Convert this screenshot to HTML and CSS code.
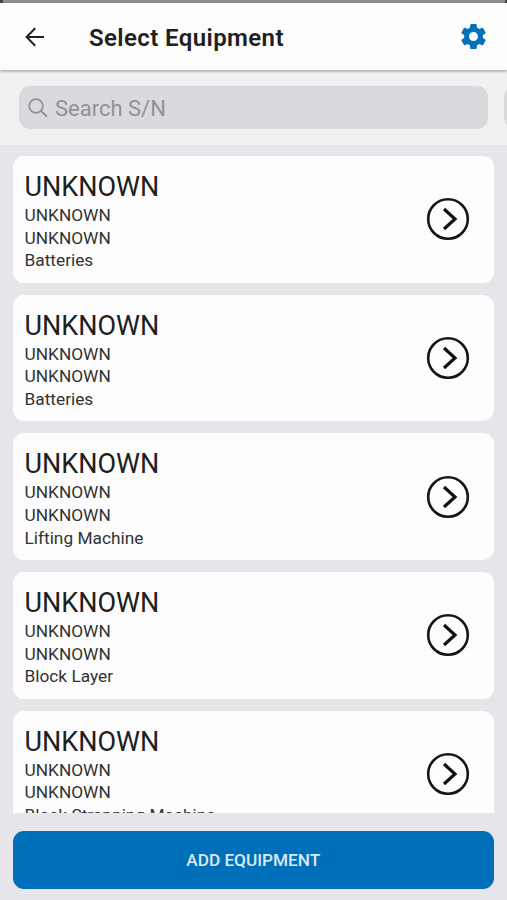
FILE: index.html
```html
<!DOCTYPE html>
<html lang="en">
<head>
<meta charset="utf-8">
<title>Select Equipment</title>
<link rel="stylesheet" href="styles.css">
</head>
<body>
<svg class="defs" aria-hidden="true">
  <symbol id="go" viewBox="0 0 44 44"><circle cx="22" cy="22" r="19.8" fill="none" stroke="#161616" stroke-width="2.6"/><path d="M18 12 29 22 18 32" fill="none" stroke="#111" stroke-width="3.2"/></symbol>
</svg>
<div class="status"></div>
<header class="bar">
  <svg class="back" viewBox="0 0 20 20"><path d="M19 10H2M10.2 1.2 1.6 10l8.6 8.8" fill="none" stroke="#202020" stroke-width="2"/></svg>
  <h1>Select Equipment</h1>
  <svg class="gear" viewBox="2 2 20 20"><path fill="#0670b8" d="M19.43 12.98c.04-.32.07-.64.07-.98s-.03-.66-.07-.98l2.11-1.65c.19-.15.24-.42.12-.64l-2-3.46c-.12-.22-.39-.3-.61-.22l-2.49 1c-.52-.4-1.08-.73-1.69-.98l-.38-2.65C14.46 2.18 14.25 2 14 2h-4c-.25 0-.46.18-.49.42l-.38 2.65c-.61.25-1.17.59-1.69.98l-2.49-1c-.23-.09-.49 0-.61.22l-2 3.46c-.13.22-.07.49.12.64l2.11 1.65c-.04.32-.07.65-.07.98s.03.66.07.98l-2.11 1.65c-.19.15-.24.42-.12.64l2 3.46c.12.22.39.3.61.22l2.49-1c.52.4 1.08.73 1.69.98l.38 2.65c.03.24.24.42.49.42h4c.25 0 .46-.18.49-.42l.38-2.65c.61-.25 1.17-.59 1.69-.98l2.49 1c.23.09.49 0 .61-.22l2-3.46c.12-.22.07-.49-.12-.64l-2.11-1.65zM12 15.6c-1.98 0-3.6-1.62-3.6-3.6s1.62-3.6 3.6-3.6 3.6 1.62 3.6 3.6-1.62 3.6-3.6 3.6z"/></svg>
</header>
<div class="filters">
  <div class="search">
    <svg viewBox="0 0 20 20"><circle cx="8" cy="8" r="6.8" fill="none" stroke="#929296" stroke-width="1.7"/><path d="m12.8 12.8 6 5.6" stroke="#929296" stroke-width="2"/></svg>
    <span>Search S/N</span>
  </div>
  <div class="next"></div>
</div>
<main class="list">
  <article class="card"><div><h2>UNKNOWN</h2><p>UNKNOWN</p><p>UNKNOWN</p><p>Batteries</p></div><svg><use href="#go"/></svg></article>
  <article class="card"><div><h2>UNKNOWN</h2><p>UNKNOWN</p><p>UNKNOWN</p><p>Batteries</p></div><svg><use href="#go"/></svg></article>
  <article class="card"><div><h2>UNKNOWN</h2><p>UNKNOWN</p><p>UNKNOWN</p><p>Lifting Machine</p></div><svg><use href="#go"/></svg></article>
  <article class="card"><div><h2>UNKNOWN</h2><p>UNKNOWN</p><p>UNKNOWN</p><p>Block Layer</p></div><svg><use href="#go"/></svg></article>
  <article class="card"><div><h2>UNKNOWN</h2><p>UNKNOWN</p><p>UNKNOWN</p><p>Block Strapping Machine</p></div><svg><use href="#go"/></svg></article>
</main>
<footer class="actions"><button class="add">ADD EQUIPMENT</button></footer>
</body>
</html>
```
FILE: styles.css
```css
* { box-sizing: border-box; }
body {
  margin: 0;
  height: 900px;
  overflow: hidden;
  display: flex;
  flex-direction: column;
  background: #e5e5ea;
  font-family: Roboto, "Liberation Sans", sans-serif;
  color: #202020;
}
h1, h2, p { margin: 0; white-space: nowrap; }
.defs { position: absolute; width: 0; height: 0; }
.status {
  flex: none;
  height: 3px;
  background: linear-gradient(90deg, #454545 3px, #909090 3px, #909090 505px, #454545 505px);
}
.bar {
  flex: none;
  height: 67px;
  display: flex;
  align-items: center;
  padding: 0 21px 0 25px;
  background: #fdfdfd;
  box-shadow: 0 1px 3px rgba(0, 0, 0, .4);
  z-index: 1;
}
.back { width: 20px; height: 20px; margin-top: 1px; }
.bar h1 {
  flex: 1;
  margin: 2px 0 0 44px;
  font-size: 24px;
  line-height: 30px;
  font-weight: 600;
  letter-spacing: .4px;
}
.gear { width: 25px; height: 25px; }
.filters {
  flex: none;
  height: 74.5px;
  display: flex;
  gap: 16px;
  padding: 16px 0 0 19px;
  background: #f1f1f2;
  overflow: hidden;
}
.search {
  flex: none;
  width: 469px;
  height: 43px;
  display: flex;
  align-items: center;
  gap: 7px;
  padding: 1px 9px 0;
  border-radius: 11px;
  background: #d9d9de;
  color: #929296;
  font-size: 22px;
}
.search svg { width: 20px; height: 20px; }
.next {
  flex: none;
  width: 60px;
  height: 43px;
  border-radius: 11px;
  background: #d9d9de;
}
.list {
  flex: none;
  height: 668px;
  padding: 11.5px 13px 0 12.5px;
  overflow: hidden;
}
.card {
  height: 126.5px;
  margin-bottom: 12.2px;
  padding: 15px 24px 0 12px;
  display: flex;
  justify-content: space-between;
  border-radius: 11px;
  background: #fdfdfd;
}
.card h2 {
  margin-bottom: 1px;
  font-size: 27px;
  line-height: 32px;
  font-weight: 400;
}
.card p {
  font-size: 17.3px;
  line-height: 22.6px;
  color: #333;
}
.card svg { width: 44px; height: 44px; margin-top: 26.4px; }
.actions {
  flex: 1;
  padding: 18px 13px 0 12.5px;
}
.add {
  display: block;
  width: 100%;
  height: 58.5px;
  padding: 0;
  border: 0;
  border-radius: 11px;
  background: #006fb9;
  color: #d9eaf6;
  font: 500 17.2px/59px Roboto, "Liberation Sans", sans-serif;
}
```
